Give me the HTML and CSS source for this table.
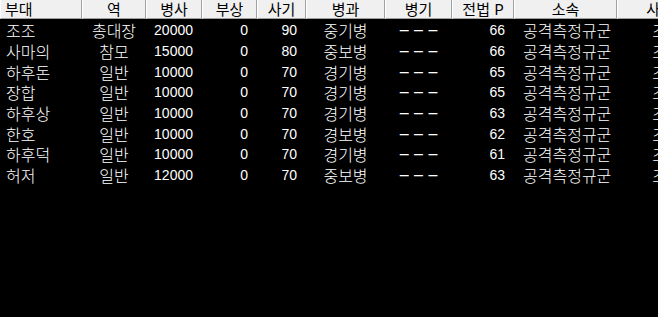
FILE: index.html
```html
<!DOCTYPE html>
<html lang="ko">
<head>
<meta charset="utf-8">
<link rel="stylesheet" href="styles.css">
</head>
<body>
<div class="view">
  <div class="row head">
    <div class="c c1 left">부대</div>
    <div class="c c2">역</div>
    <div class="c c3">병사</div>
    <div class="c c4">부상</div>
    <div class="c c5">사기</div>
    <div class="c c6">병과</div>
    <div class="c c7">병기</div>
    <div class="c c8">전법 P</div>
    <div class="c c9">소속</div>
    <div class="c c10">사령관</div>
  </div>
  <div class="row"><div class="c c1 left">조조</div><div class="c c2">총대장</div><div class="c c3 num">20000</div><div class="c c4 num">0</div><div class="c c5 num">90</div><div class="c c6">중기병</div><div class="c c7 dash">– – –</div><div class="c c8 num">66</div><div class="c c9 left">공격측정규군</div><div class="c c10">조조</div></div>
  <div class="row"><div class="c c1 left">사마의</div><div class="c c2">참모</div><div class="c c3 num">15000</div><div class="c c4 num">0</div><div class="c c5 num">80</div><div class="c c6">중보병</div><div class="c c7 dash">– – –</div><div class="c c8 num">66</div><div class="c c9 left">공격측정규군</div><div class="c c10">조조</div></div>
  <div class="row"><div class="c c1 left">하후돈</div><div class="c c2">일반</div><div class="c c3 num">10000</div><div class="c c4 num">0</div><div class="c c5 num">70</div><div class="c c6">경기병</div><div class="c c7 dash">– – –</div><div class="c c8 num">65</div><div class="c c9 left">공격측정규군</div><div class="c c10">조조</div></div>
  <div class="row"><div class="c c1 left">장합</div><div class="c c2">일반</div><div class="c c3 num">10000</div><div class="c c4 num">0</div><div class="c c5 num">70</div><div class="c c6">경기병</div><div class="c c7 dash">– – –</div><div class="c c8 num">65</div><div class="c c9 left">공격측정규군</div><div class="c c10">조조</div></div>
  <div class="row"><div class="c c1 left">하후상</div><div class="c c2">일반</div><div class="c c3 num">10000</div><div class="c c4 num">0</div><div class="c c5 num">70</div><div class="c c6">경기병</div><div class="c c7 dash">– – –</div><div class="c c8 num">63</div><div class="c c9 left">공격측정규군</div><div class="c c10">조조</div></div>
  <div class="row"><div class="c c1 left">한호</div><div class="c c2">일반</div><div class="c c3 num">10000</div><div class="c c4 num">0</div><div class="c c5 num">70</div><div class="c c6">경보병</div><div class="c c7 dash">– – –</div><div class="c c8 num">62</div><div class="c c9 left">공격측정규군</div><div class="c c10">조조</div></div>
  <div class="row"><div class="c c1 left">하후덕</div><div class="c c2">일반</div><div class="c c3 num">10000</div><div class="c c4 num">0</div><div class="c c5 num">70</div><div class="c c6">경기병</div><div class="c c7 dash">– – –</div><div class="c c8 num">61</div><div class="c c9 left">공격측정규군</div><div class="c c10">조조</div></div>
  <div class="row"><div class="c c1 left">허저</div><div class="c c2">일반</div><div class="c c3 num">12000</div><div class="c c4 num">0</div><div class="c c5 num">70</div><div class="c c6">중보병</div><div class="c c7 dash">– – –</div><div class="c c8 num">63</div><div class="c c9 left">공격측정규군</div><div class="c c10">조조</div></div>
</div>
</body>
</html>
```
FILE: styles.css
```css
html, body {
  margin: 0;
  padding: 0;
  background: #000;
  overflow: hidden;
}
.view {
  width: 760px;
  font-family: "Noto Sans CJK KR", "Noto Sans", sans-serif;
  font-size: 16px;
  font-weight: 300;
  color: #fff;
}
.row {
  display: grid;
  grid-template-columns: 82px 64px 56px 55px 49px 79px 67px 62px 103px 100px;
  height: 20.7px;
  align-items: center;
  line-height: 20px;
}
.c {
  text-align: center;
  white-space: nowrap;
}
.left { text-align: left; padding-left: 6px; }
.c9.left { padding-left: 9px; }
.num {
  text-align: right;
  padding-right: 9px;
  font-family: "Liberation Sans", sans-serif;
  font-size: 14px;
  font-weight: 400;
}
.dash {
  font-family: "Liberation Sans", sans-serif;
  font-size: 16px;
  word-spacing: 1px;
}

.head {
  height: 19px;
  line-height: 18px;
  align-items: stretch;
  color: #000;
  font-size: 15px;
  font-weight: 400;
  margin-bottom: 1px;
}
.head .c {
  background: #f0f0f0;
  border-left: 1px solid #fff;
  border-right: 1px solid #a0a0a0;
  border-bottom: 1px solid #a0a0a0;
  box-sizing: border-box;
}
.head .left { padding-left: 4px; }
```
